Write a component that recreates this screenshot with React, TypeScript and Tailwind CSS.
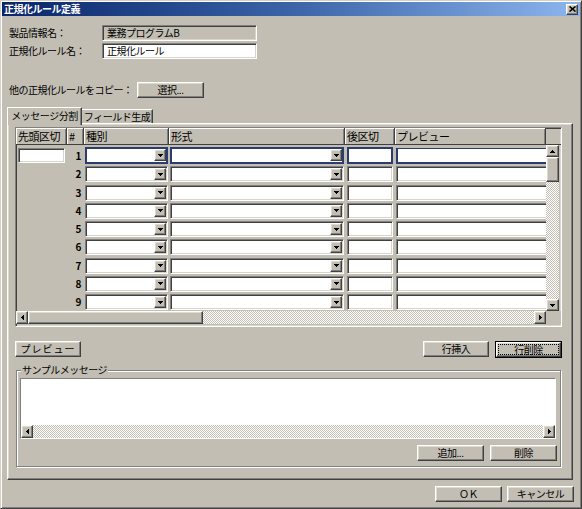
import React from "react";

const raised =
  "border border-t-white border-l-white border-r-[#404040] border-b-[#404040] shadow-[inset_-1px_-1px_0_#808080,inset_1px_1px_0_#dedad0]";
const sunken =
  "border border-t-[#808080] border-l-[#808080] border-r-white border-b-white shadow-[inset_1px_1px_0_#404040,inset_-1px_-1px_0_#d8d4ca]";
const dither =
  "bg-[repeating-conic-gradient(#ffffff_0%_25%,#c2beb3_0%_50%)] bg-[length:2px_2px]";

function Down() {
  return (
    <svg width="5" height="3" viewBox="0 0 5 3" shapeRendering="crispEdges">
      <path d="M0 0h5v1H0zM1 1h3v1H1zM2 2h1v1H2z" fill="#000" />
    </svg>
  );
}
function Up() {
  return (
    <svg width="5" height="3" viewBox="0 0 5 3" shapeRendering="crispEdges">
      <path d="M2 0h1v1H2zM1 1h3v1H1zM0 2h5v1H0z" fill="#000" />
    </svg>
  );
}
function Left() {
  return (
    <svg width="3" height="5" viewBox="0 0 3 5" shapeRendering="crispEdges">
      <path d="M2 0h1v5H2zM1 1h1v3H1zM0 2h1v1H0z" fill="#000" />
    </svg>
  );
}
function Right() {
  return (
    <svg width="3" height="5" viewBox="0 0 3 5" shapeRendering="crispEdges">
      <path d="M0 0h1v5H0zM1 1h1v3H1zM2 2h1v1H2z" fill="#000" />
    </svg>
  );
}

function ArrowBtn({ className = "", children }: { className?: string; children?: React.ReactNode }) {
  return (
    <div className={`${raised} bg-[#c2beb3] shrink-0 flex items-center justify-center ${className}`}>
      {children}
    </div>
  );
}

function Button({ className = "", children }: { className?: string; children: React.ReactNode }) {
  return (
    <div className={`${raised} bg-[#c2beb3] shrink-0 flex items-center justify-center whitespace-nowrap ${className}`}>
      {children}
    </div>
  );
}

function Combo({ className = "", sel = false }: { className?: string; sel?: boolean }) {
  const frame = sel ? "border-2 border-[#2b3d70] h-[17px] -mt-[1px]" : `${sunken} p-[1px] h-[16px]`;
  return (
    <div className={`${frame} bg-white flex justify-end ${className}`}>
      <ArrowBtn className="w-[12px] h-[12px]">
        <Down />
      </ArrowBtn>
    </div>
  );
}

function TextBox({ className = "", sel = false }: { className?: string; sel?: boolean }) {
  const frame = sel ? "border-2 border-[#2b3d70] h-[17px] -mt-[1px]" : `${sunken} h-[16px]`;
  return <div className={`${frame} bg-white ${className}`} />;
}

const hdr =
  "h-full shrink-0 flex items-center pl-[2px] border-r border-r-[#404040] shadow-[inset_1px_1px_0_#ffffff,inset_-1px_0_0_#808080] overflow-hidden whitespace-nowrap";

export default function App() {
  const rows = [1, 2, 3, 4, 5, 6, 7, 8, 9];
  return (
    <div className="w-[582px] h-[509px] bg-[#c2beb3] border border-t-[#d4d0c8] border-l-[#d4d0c8] border-r-[#404040] border-b-[#404040] shadow-[inset_1px_1px_0_#ffffff,inset_-1px_-1px_0_#808080] font-['Noto_Sans_CJK_JP',sans-serif] text-[10px] tracking-[-0.5px] leading-none text-black overflow-hidden flex flex-col">
      {/* Title bar */}
      <div className="mx-[1px] mt-[1px] h-[14px] shrink-0 flex items-center justify-between bg-gradient-to-r from-[#0a246a] via-[#3b64a8] to-[#8db6ee] pl-[2px] pr-[2px]">
        <span className="text-white font-bold text-[10px] tracking-[-0.5px]">正規化ルール定義</span>
        <div className={`${raised} bg-[#c2beb3] w-[12px] h-[11px] flex items-center justify-center`}>
          <svg width="7" height="6" viewBox="0 0 7 6">
            <path d="M0.5 0.5L6.5 5.5M6.5 0.5L0.5 5.5" stroke="#000" strokeWidth="1.6" />
          </svg>
        </div>
      </div>

      {/* Product info */}
      <div className="ml-[8px] mt-[9px] flex flex-col gap-[2px]">
        <div className="flex items-center h-[16px]">
          <span className="w-[93px] whitespace-nowrap">製品情報名：</span>
          <div className={`${sunken} w-[155px] h-[16px] bg-[#c2beb3] flex items-center pl-[4px]`}>業務プログラムB</div>
        </div>
        <div className="flex items-center h-[16px]">
          <span className="w-[93px] whitespace-nowrap">正規化ルール名：</span>
          <div className={`${sunken} w-[155px] h-[16px] bg-white flex items-center pl-[4px]`}>正規化ルール</div>
        </div>
      </div>

      <div className="ml-[8px] mt-[23px] flex items-center h-[16px]">
        <span className="w-[128px] shrink-0 whitespace-nowrap">他の正規化ルールをコピー：</span>
        <Button className="w-[67px] h-[16px]">選択...</Button>
      </div>

      {/* Tabs */}
      <div className="ml-[6px] mt-[9px] flex flex-col">
        <div className="flex items-end h-[16px] relative z-10">
          <div className="w-[75px] h-[18px] -mb-[2px] bg-[#c2beb3] border-t border-l border-r border-t-white border-l-white border-r-[#404040] shadow-[inset_-1px_0_0_#808080] flex items-center justify-center pb-[2px] whitespace-nowrap">
            メッセージ分割
          </div>
          <div className="w-[71px] h-[14px] border-t border-r border-t-white border-r-[#404040] shadow-[inset_-1px_0_0_#808080] flex items-center justify-center whitespace-nowrap">
            フィールド生成
          </div>
        </div>

        {/* Panel */}
        <div className={`${raised} w-[566px] h-[357px] flex flex-col`}>
          {/* Grid */}
          <div className={`${sunken} ml-[7px] mt-[3px] w-[547px] h-[200px] flex flex-col overflow-hidden`}>
            <div className="h-[17px] shrink-0 flex border-b border-b-[#404040] text-[11px]">
              <div className={`${hdr} w-[51px]`}>先頭区切</div>
              <div className={`${hdr} w-[17px]`}>#</div>
              <div className={`${hdr} w-[85px]`}>種別</div>
              <div className={`${hdr} w-[176px]`}>形式</div>
              <div className={`${hdr} w-[50px]`}>後区切</div>
              <div className={`${hdr} w-[151px]`}>プレビュー</div>
              <div className="flex-1" />
            </div>
            <div className="h-[166px] shrink-0 flex">
              <div className="w-[530px] flex flex-col pt-[3px] overflow-hidden">
                {rows.map((n) => {
                  const sel = n === 1;
                  return (
                    <div key={n} className="flex items-start h-[18.25px] shrink-0">
                      <div className="w-[51px] shrink-0">
                        {sel && <TextBox className="ml-[2px] w-[47px] !h-[15px] !mt-0" />}
                      </div>
                      <div className="w-[17px] h-[16px] shrink-0 flex items-center justify-end pr-[3px] font-bold">
                        {n}
                      </div>
                      <div className="w-[85px] shrink-0">
                        <Combo sel={sel} className="ml-[1px] w-[83px]" />
                      </div>
                      <div className="w-[176px] shrink-0">
                        <Combo sel={sel} className="ml-[1px] w-[174px]" />
                      </div>
                      <div className="w-[50px] shrink-0">
                        <TextBox sel={sel} className="ml-[2px] w-[46px]" />
                      </div>
                      <div className="w-[151px] shrink-0 overflow-hidden">
                        <TextBox sel={sel} className="ml-[1px] w-[160px]" />
                      </div>
                    </div>
                  );
                })}
              </div>
              <div className="w-[13px] flex flex-col">
                <ArrowBtn className="h-[12px]">
                  <Up />
                </ArrowBtn>
                <div className={`${raised} bg-[#c2beb3] h-[25px] shrink-0`} />
                <div className={`flex-1 ${dither}`} />
                <ArrowBtn className="h-[12px]">
                  <Down />
                </ArrowBtn>
              </div>
            </div>
            <div className="h-[13px] shrink-0 flex">
              <div className="w-[530px] flex">
                <ArrowBtn className="w-[12px]">
                  <Left />
                </ArrowBtn>
                <div className={`${raised} bg-[#c2beb3] w-[175px] shrink-0`} />
                <div className={`flex-1 ${dither}`} />
                <ArrowBtn className="w-[12px]">
                  <Right />
                </ArrowBtn>
              </div>
              <div className="flex-1 bg-[#c2beb3]" />
            </div>
          </div>

          {/* Buttons row */}
          <div className="mt-[14px] flex ml-[7px]">
            <Button className="w-[66px] h-[16px] tracking-[1px]">プレビュー</Button>
            <Button className="ml-[342px] w-[66px] h-[16px]">行挿入</Button>
            <div className="ml-[6px] w-[67px] h-[17px] border border-black flex">
              <div className={`${raised} bg-[#c2beb3] flex-1 flex p-[1px]`}>
                <div className="flex-1 border border-dotted border-black flex items-center justify-center">行削除</div>
              </div>
            </div>
          </div>

          {/* Group box */}
          <div className="ml-[8px] mt-[12px] w-[545px] h-[97px] relative border border-[#808080] shadow-[inset_1px_1px_0_#ffffff,1px_1px_0_#ffffff] flex flex-col">
            <span className="absolute left-[4px] -top-[6px] px-[1px] bg-[#c2beb3] whitespace-nowrap">サンプルメッセージ</span>
            <div className={`${sunken} ml-[3px] mt-[7px] w-[536px] h-[61px] flex flex-col`}>
              <div className="flex-1 bg-white" />
              <div className="h-[13px] shrink-0 flex">
                <ArrowBtn className="w-[12px]">
                  <Left />
                </ArrowBtn>
                <div className={`flex-1 ${dither}`} />
                <ArrowBtn className="w-[12px]">
                  <Right />
                </ArrowBtn>
              </div>
            </div>
            <div className="mt-[6px] flex justify-end gap-[6px] pr-[3px]">
              <Button className="w-[67px] h-[16px]">追加...</Button>
              <Button className="w-[67px] h-[16px]">削除</Button>
            </div>
          </div>
        </div>
      </div>

      {/* Bottom buttons */}
      <div className="mt-[6px] flex justify-end gap-[5px] pr-[7px]">
        <Button className="w-[67px] h-[16px]">ＯＫ</Button>
        <Button className="w-[67px] h-[16px]">キャンセル</Button>
      </div>
    </div>
  );
}
